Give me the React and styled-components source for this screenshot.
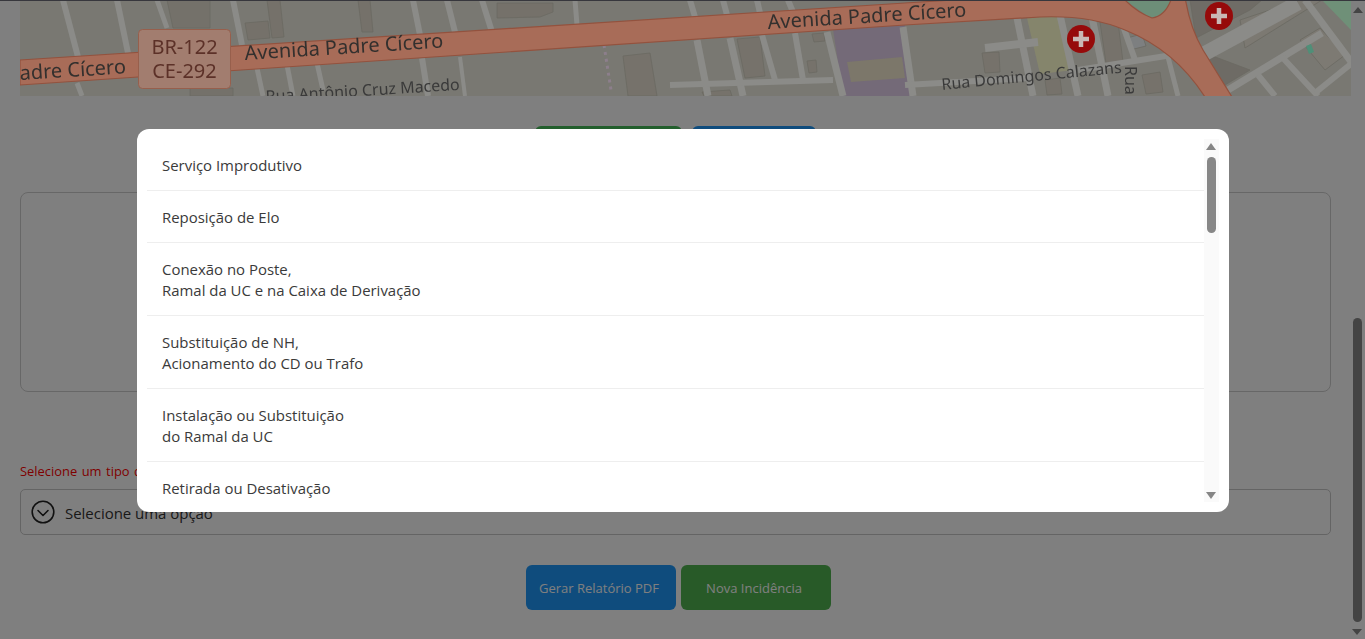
import React from "react";
import styled, { createGlobalStyle } from "styled-components";

const Global = createGlobalStyle`
  html, body { margin: 0; padding: 0; height: 100%; overflow: hidden; background: #fff; }
  body { font-family: "Open Sans", "Noto Sans", sans-serif; color: #222; }
`;
const Shell = styled.div`
  width: 1365px; height: 639px; display: flex; flex-direction: column; overflow: hidden; position: relative;
`;
const TopEdge = styled.div`
  height: 1px; background: #37373d; position: relative; z-index: 2; flex: none;
`;
const Body = styled.div`flex: 1; display: flex; min-height: 0;`;
const Page = styled.main`
  flex: 1; min-width: 0; padding: 0 20px; display: flex; flex-direction: column;
`;
const MapFrame = styled.div`
  height: 95px; margin-right: -20px; overflow: hidden; position: relative; z-index: 2; flex: none; background: #797872;
  svg { display: block; filter: blur(.6px); }
`;
const ActionsTop = styled.div`
  display: flex; gap: 10px; margin-top: 30px; padding-left: 515px; flex: none;
`;
const ActionBtn = styled.button`
  border: 0; border-radius: 6px; height: 45px; width: ${p => p.$w}px; background: ${p => p.$bg};
  color: #fff; font: 400 13px "Open Sans", sans-serif; padding: 0 4px 0 0;
`;
const CanvasBox = styled.section`
  margin-top: 21px; height: 198px; border: 1px solid #cfcfcf; border-radius: 8px; flex: none;
`;
const Warn = styled.p`
  margin: 72px 0 0; height: 17px; line-height: 15px; font-size: 12.9px; word-spacing: 1.2px; color: #f00; flex: none;
`;
const SelectBox = styled.div`
  margin-top: 8px; height: 44px; border: 1px solid #c8c8c8; border-radius: 5px; display: flex; align-items: center;
  gap: 10px; padding-left: 10px; font-size: 15px; line-height: 24px; color: #333; flex: none;
`;
const SelectLabel = styled.span`padding-top: 2px; letter-spacing: -.03px;`;
const ActionsBottom = styled.div`
  display: flex; justify-content: center; gap: 5px; margin-top: 30px; flex: none; padding-left: 6px;
`;
const Rail = styled.aside`
  width: 14px; flex: none; display: flex; flex-direction: column; align-items: center; position: relative;
`;
const RailArrow = styled.i`
  width: 0; height: 0; border-left: 5px solid transparent; border-right: 5px solid transparent;
  ${p => p.$down ? "border-top: 6px solid #888;" : "border-bottom: 6px solid #888;"}
  margin: ${p => p.$m};
`;
const RailThumb = styled.div`
  width: 9px; height: 304px; border-radius: 5px; background: #888; margin-top: 305px; margin-left: -1px;
`;
const Dim = styled.div`
  position: fixed; inset: 0; background: rgba(0,0,0,.5); z-index: 1;
`;
const ModalLayer = styled.div`
  position: fixed; inset: 0; z-index: 3; display: flex; justify-content: center; align-items: flex-start; padding-top: 129px;
`;
const Modal = styled.div`
  width: 1092px; height: 383px; box-sizing: border-box; background: #fff; border-radius: 12px; padding: 10px;
  display: flex;
`;
const List = styled.ul`
  list-style: none; margin: 0; padding: 0; flex: 1; min-width: 0; overflow: hidden;
`;
const Item = styled.li`
  padding: 16px 14px 14px 15.5px; line-height: 21px; font-size: 14.95px; color: #3a3a3a; border-bottom: 1px solid #eee;
`;
const ListRail = styled.div`
  width: 15px; flex: none; background: #fafafa; display: flex; flex-direction: column; align-items: center;
`;
const ListArrow = styled.i`
  width: 0; height: 0; border-left: 5.5px solid transparent; border-right: 5.5px solid transparent; flex: none;
  ${p => p.$down ? "border-top: 7px solid #868686; margin-top: auto; margin-bottom: 3px;" : "border-bottom: 7px solid #868686; margin-top: 4px;"}
`;
const ListThumb = styled.div`
  width: 9px; height: 76px; border-radius: 5px; background: #878787; margin-top: 7px;
`;

const streets = [
  [63,0,78,57,6],[77,83,82,96,5],[117,0,128,53,6],[157,0,167,28,5],[233,0,242,45,6],[257,68,263,96,5],[287,65,293,96,5],
  [317,63,323,90,5],[422,58,428,96,6],[413,0,420,35,6],[447,0,455,32,6],[482,0,492,32,6],[575,0,577,25,5],[690,0,695,17,6],
  [723,0,727,15,6],[757,0,760,13,6],[788,0,793,12,6],[460,57,465,96,4],[697,40,708,96,7],[730,38,743,96,7],[762,35,775,80,6],
  [795,33,803,80,6],[827,32,843,96,7],[903,27,913,96,7],[670,85,833,80,6],[905,85,1030,78,6],[1017,18,1033,96,7],
  [1060,15,1078,96,7],[1092,17,1108,96,7],[1122,23,1135,60,6],[985,48,1038,42,8],[1078,70,1172,55,6],[1168,57,1178,96,5],
  [1202,55,1298,3,15],[1305,0,1352,63,7],[1228,90,1322,33,7],[1258,75,1275,96,6],[1282,57,1318,96,6],[1315,93,1352,63,6],
];
const blocks = [
  ["167,0 210,0 210,28 173,28","#74716a"],["245,23 268,21 270,38 248,40","#75716a"],["267,0 280,0 284,37 272,38","#75716a"],
  ["358,0 370,0 373,32 362,32","#75716a"],["190,88 233,88 233,96 190,96","#74716a"],["497,3 553,3 553,12 540,17 497,18","#75716a"],
  ["623,56 650,53 657,96 628,96","#76726b"],["737,39 760,37 765,76 745,78","#76726b"],["807,61 816,60 817,72 809,73","#76726b"],
  ["812,34 824,33 825,41 814,42","#76726b"],["982,53 999,52 1000,72 985,73","#76726b"],["1100,22 1118,22 1123,62 1106,63","#76726b"],
  ["1127,38 1142,34 1146,46 1130,50","#7d7f80"],["1190,0 1262,0 1250,10 1196,38","#6f6c66"],["1225,85 1195,62 1210,55 1250,70","#6e6b65"],
  ["1300,40 1325,70 1345,55 1320,28","#7d7a73"],["1142,75 1160,72 1163,92 1146,94","#76726b"],["1045,80 1060,78 1062,94 1047,95","#76726b"],
  ["1240,20 1300,0 1322,0 1245,48","#7c7972"],["702,92 730,90 732,96 704,96","#76726b"],
];

function MapArt() {
  return (
    <svg viewBox="20 1 1331 95" width="1331" height="95" aria-hidden="true">
      <rect x="20" y="0" width="1331" height="96" fill="#797872" />
      <polygon points="833,29 905,25 913,96 843,96" fill="#746a78" />
      <polygon points="847,62 902,57 905,78 851,82" fill="#7c776a" />
      <polygon points="1027,18 1062,15 1074,70 1040,74" fill="#85856c" />
      <polygon points="1125,0 1172,0 1165,14 1150,18" fill="#6d8e78" />
      <polygon points="1322,0 1351,0 1351,30" fill="#6f9078" />
      {blocks.map(([pts, c], i) => <polygon key={i} points={pts} fill={c} stroke="#6b6962" strokeWidth=".8" />)}
      {streets.map(([a, b, c, d, w], i) => (
        <line key={i} x1={a} y1={b} x2={c} y2={d} stroke="#8b8b88" strokeWidth={w} />
      ))}
      <line x1="604" y1="45" x2="611" y2="90" stroke="#8d7f8c" strokeWidth="3" strokeDasharray="3 4" />
      <polygon points="1306,46 1311,44 1314,52 1309,54" fill="#4f8f78" />
      <path
        d="M20 60 L905 3 L1000 -3 L1122 -3 Q1136 12 1152 18 Q1166 16 1172 -3 L1185 -3 Q1190 28 1203 50 L1232 97 L1205 97 Q1175 50 1125 30 Q1090 15 1040 17 L905 25 L20 85 Z"
        fill="#a86c58" stroke="#93523e" strokeWidth="1.2"
      />
      <g fontFamily="'Noto Sans', sans-serif" fontSize="20" fill="#33302e">
        <text x="245" y="60" transform="rotate(-3.6 245 60)">Avenida Padre Cícero</text>
        <text x="768" y="29" transform="rotate(-3.6 768 29)">Avenida Padre Cícero</text>
        <text x="20" y="80" transform="rotate(-3.6 20 80)">adre Cícero</text>
      </g>
      <g fontFamily="'Noto Sans', sans-serif" fontSize="16" fill="#3a3a3a">
        <text x="942" y="90" transform="rotate(-5.5 942 90)">Rua Domingos Calazans</text>
        <text x="1125" y="66" transform="rotate(90 1125 66)">Rua</text>
        <text x="266" y="102" transform="rotate(-3.6 266 102)">Rua Antônio Cruz Macedo</text>
      </g>
      <rect x="138.5" y="29.5" width="92" height="59" rx="4" fill="#a27d6f" stroke="#975f4c" />
      <g fontFamily="'Noto Sans', sans-serif" fontSize="20" fill="#5c3128" textAnchor="middle">
        <text x="184.5" y="54">BR-122</text>
        <text x="184.5" y="78">CE-292</text>
      </g>
      {[[1081,39],[1219,16]].map(([x, y]) => (
        <g key={x}>
          <circle cx={x} cy={y} r="14" fill="#960a0a" />
          <path d={`M${x-8} ${y}h16M${x} ${y-8}v16`} stroke="#c9b8b4" strokeWidth="4.5" />
        </g>
      ))}
    </svg>
  );
}

const ChevronCircle = () => (
  <svg width="24" height="24" viewBox="0 0 24 24" fill="none" stroke="#222" strokeWidth="1.6" strokeLinecap="round" strokeLinejoin="round">
    <circle cx="12" cy="12" r="10.8" />
    <path d="M7 10.5l5 5 5-5" />
  </svg>
);

const items = [
  ["Serviço Improdutivo"],
  ["Reposição de Elo"],
  ["Conexão no Poste,", "Ramal da UC e na Caixa de Derivação"],
  ["Substituição de NH,", "Acionamento do CD ou Trafo"],
  ["Instalação ou Substituição", "do Ramal da UC"],
  ["Retirada ou Desativação"],
];

export default function App() {
  return (
    <Shell>
      <Global />
      <TopEdge />
      <Body>
        <Page>
          <MapFrame><MapArt /></MapFrame>
          <ActionsTop>
            <ActionBtn $w={147} $bg="#46be5a" />
            <ActionBtn $w={124} $bg="#1e98fa" />
          </ActionsTop>
          <CanvasBox />
          <Warn>Selecione um tipo de serviço</Warn>
          <SelectBox><ChevronCircle /><SelectLabel>Selecione uma opção</SelectLabel></SelectBox>
          <ActionsBottom>
            <ActionBtn $w={150} $bg="#1e98fa">Gerar Relatório PDF</ActionBtn>
            <ActionBtn $w={150} $bg="#50b450">Nova Incidência</ActionBtn>
          </ActionsBottom>
        </Page>
        <Rail>
          <RailArrow $m="6px 0 0" />
          <RailThumb />
          <RailArrow $down $m="7px 0 0 -3px" />
        </Rail>
      </Body>
      <Dim />
      <ModalLayer>
        <Modal>
          <List>
            {items.map((lines, i) => (
              <Item key={i}>
                {lines.map((l, j) => <React.Fragment key={j}>{j > 0 && <br />}{l}</React.Fragment>)}
              </Item>
            ))}
          </List>
          <ListRail>
            <ListArrow />
            <ListThumb />
            <ListArrow $down />
          </ListRail>
        </Modal>
      </ModalLayer>
    </Shell>
  );
}
